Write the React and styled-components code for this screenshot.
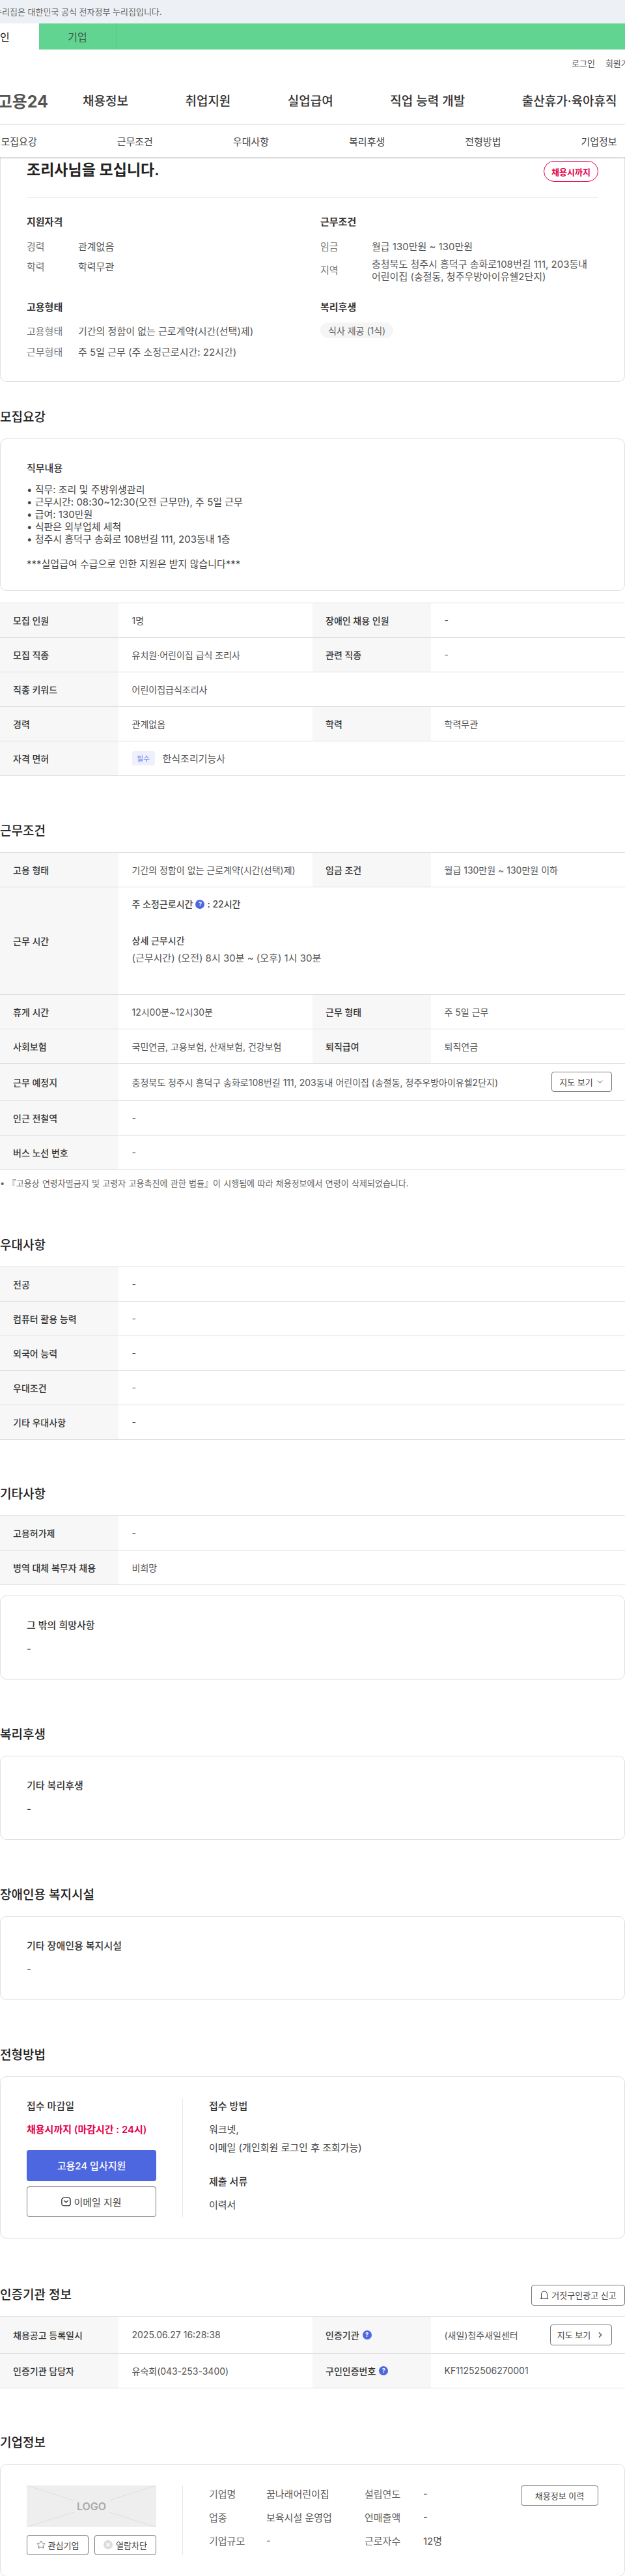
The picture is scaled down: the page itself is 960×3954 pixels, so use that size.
import React from "react";
import styled, { createGlobalStyle } from "styled-components";
import { ChevronDown, ChevronRight, Star } from "lucide-react";

const FONT = `Inter, "Noto Sans CJK KR", "Noto Sans", sans-serif`;

const GlobalStyle = createGlobalStyle`
  html, body {
    margin: 0;
    padding: 0;
    background: #fff;
  }
  body {
    font-family: ${FONT};
    font-size: 14px;
    color: #444;
  }
  * {
    box-sizing: border-box;
  }
`;

const Page = styled.div`
  width: 960px;
  height: 3954px;
  overflow: hidden;
  background: #fff;
`;

/* header */
const Notice = styled.div`
  height: 36px;
  background: #edf0f5;
  color: #666;
  font-size: 13px;
  line-height: 36px;
  padding-left: 0;
  white-space: nowrap;
  text-indent: -9px;
`;

const AudienceBar = styled.div`
  display: flex;
  height: 40px;
  margin-left: -60px;
  background: #62d491;
`;

const AudienceTab = styled.div`
  width: ${props => (props.$active ? "120px" : "119px")};
  display: flex;
  align-items: center;
  justify-content: center;
  font-size: 16px;
  color: ${props => (props.$active ? "#222" : "#3f5a49")};
  background: ${props => (props.$active ? "#fff" : "transparent")};
  border-right: ${props => (props.$active ? "0" : "1px solid #55c583")};
`;

const UtilLinks = styled.div`
  display: flex;
  gap: 16px;
  height: 40px;
  padding-left: 878px;
  align-items: center;
  font-size: 13px;
  color: #555;
  white-space: nowrap;
`;

const MainNav = styled.nav`
  display: flex;
  height: 76px;
  align-items: center;
  border-bottom: 1px solid #e8e8e8;
  white-space: nowrap;
`;

const Logo = styled.div`
  width: 74px;
  margin-right: 53px;
  display: flex;
  justify-content: flex-end;
  font-size: 25px;
  font-weight: 700;
  color: #555;
`;

const NavLinks = styled.div`
  display: flex;
  gap: 87.5px;
  font-size: 19px;
  font-weight: 500;
  color: #333;
`;

const SubNav = styled.div`
  position: relative;
  z-index: 2;
  height: 49px;
  background: #fff;
  box-shadow: 0 1px 3px rgba(0, 0, 0, 0.25);
`;

const SubNavGrid = styled.div`
  display: grid;
  grid-template-columns: repeat(6, 178.2px);
  margin-left: -60px;
  height: 100%;
  align-items: center;
  justify-items: center;
  font-size: 15px;
  color: #444;
  white-space: nowrap;
`;

/* cards */
const Card = styled.div`
  border: 1px solid #e0e0e0;
  border-radius: 10px;
  background: #fff;
  padding: ${props => props.$padding || "35px 40px 31px"};
  margin-top: ${props => props.$top || "0"};
`;

const SummaryCard = styled(Card)`
  border-top: 0;
  border-radius: 0 0 10px 10px;
  padding: 0 40px 36px;
  height: 345px;
`;

const TitleRow = styled.div`
  display: flex;
  justify-content: space-between;
  height: 63px;
  padding-top: 6px;
  border-bottom: 1px solid #e8e8e8;
`;

const JobTitle = styled.h1`
  margin: 0;
  font-size: 23px;
  line-height: 28px;
  font-weight: 600;
  color: #222;
`;

const DeadlineBadge = styled.span`
  width: 84px;
  height: 32px;
  display: flex;
  align-items: center;
  justify-content: center;
  border: 1px solid #e6004d;
  border-radius: 16px;
  color: #e6004d;
  font-size: 13px;
  font-weight: 600;
`;

const SummaryGrid = styled.div`
  display: grid;
  grid-template-columns: 451px 1fr;
  row-gap: 28px;
  padding-top: 27px;
`;

const BlockTitle = styled.h3`
  margin: 0 0 ${props => props.$gap || "17px"};
  font-size: 15px;
  line-height: 20px;
  font-weight: 600;
  color: #333;
`;

const InfoList = styled.div`
  display: flex;
  flex-direction: column;
  gap: ${props => props.$gap || "11.5px"};
`;

const InfoRow = styled.div`
  display: flex;
  align-items: center;
  font-size: 15px;
  line-height: 19px;
  min-height: 20px;
`;

const InfoLabel = styled.span`
  width: 79px;
  flex: none;
  color: #777;
`;

const InfoValue = styled.span`
  color: #555;
`;

const Chip = styled.span`
  display: inline-flex;
  align-items: center;
  height: 24px;
  padding: 0 12px;
  border-radius: 12px;
  background: #f5f5f5;
  color: #666;
  font-size: 14px;
`;

/* sections */
const Section = styled.section`
  margin-top: ${props => props.$top || "72px"};
`;

const HeadingRow = styled.div`
  display: flex;
  justify-content: space-between;
  align-items: center;
  height: 26px;
  margin-bottom: 19px;
`;

const Heading = styled.h2`
  margin: 0;
  font-size: 19px;
  line-height: 26px;
  font-weight: 500;
  color: #222;
`;

const CardTitle = styled.h4`
  margin: 0 0 ${props => props.$gap || "12.5px"};
  font-size: 15px;
  line-height: 20px;
  font-weight: ${props => props.$weight || 500};
  color: #333;
`;

const CardText = styled.div`
  font-size: 15px;
  line-height: 19px;
  color: #444;
  white-space: pre-line;
`;

/* tables */
const Table = styled.div`
  border-top: 1px solid #e0e0e0;
  margin-top: ${props => props.$top || "0"};
  margin-bottom: -1px;
`;

const Row = styled.div`
  display: grid;
  grid-template-columns: 182px 298px 182px 298px;
  height: ${props => props.$height || 53}px;
  border-bottom: 1px solid #e0e0e0;
`;

const Label = styled.div`
  display: flex;
  align-items: center;
  gap: 5px;
  padding-left: 20px;
  background: #f7f7f7;
  font-weight: 500;
  color: #333;
`;

const Value = styled.div`
  display: flex;
  align-items: center;
  justify-content: ${props => (props.$between ? "space-between" : "flex-start")};
  padding: 0 20px 0 20.5px;
  color: #555;
  grid-column: ${props => (props.$wide ? "span 3" : "auto")};
  white-space: nowrap;
`;

const StackValue = styled(Value)`
  display: block;
  padding-top: 16px;
  line-height: 20px;
`;

const StrongLine = styled.div`
  display: flex;
  align-items: center;
  gap: 4px;
  font-weight: 500;
  color: #444;
  margin-bottom: ${props => props.$gap || "7px"};
`;

const DetailLine = styled.div`
  font-size: 15px;
`;

const RequiredTag = styled.span`
  display: inline-flex;
  align-items: center;
  justify-content: center;
  width: 35px;
  height: 22px;
  margin-right: 12px;
  border-radius: 3px;
  background: #eef1fc;
  color: #6e86ee;
  font-size: 11px;
`;

const LicenseName = styled.span`
  font-size: 15px;
`;

const HelpDot = styled.span`
  display: inline-flex;
  align-items: center;
  justify-content: center;
  width: 14px;
  height: 14px;
  border-radius: 50%;
  background: #4d67e0;
  color: #fff;
  font-size: 9px;
  font-weight: 700;
`;

const Note = styled.div`
  margin-top: 11px;
  font-size: 13px;
  line-height: 20px;
  word-spacing: 0.7px;
  color: #666;
  white-space: nowrap;
`;

/* buttons */
const OutlineButton = styled.button`
  display: inline-flex;
  align-items: center;
  justify-content: center;
  gap: ${props => props.$gap || "4px"};
  flex: none;
  width: ${props => props.$width || "auto"};
  height: ${props => props.$height || "31px"};
  padding: 0;
  border: 1px solid #777;
  border-radius: 4px;
  background: #fff;
  font-family: inherit;
  font-size: ${props => props.$size || "13px"};
  color: #444;
  white-space: nowrap;
`;

const ApplyButton = styled.button`
  display: block;
  width: 100%;
  height: 48px;
  margin-bottom: 8px;
  border: 0;
  border-radius: 4px;
  background: #4d67e0;
  color: #fff;
  font-family: inherit;
  font-size: 15px;
  font-weight: 500;
`;

/* apply card */
const SplitRow = styled.div`
  display: grid;
  grid-template-columns: 199px 1fr;
  column-gap: 40px;
`;

const SplitRight = styled.div`
  border-left: 1px solid #e8e8e8;
  padding-left: 40px;
`;

const ApplyTitle = styled.div`
  font-size: 15px;
  line-height: 26px;
  font-weight: 500;
  color: #333;
  margin-top: ${props => props.$top || "0"};
`;

const DeadlineText = styled.div`
  margin: 9px 0 17px;
  font-size: 15px;
  line-height: 28px;
  font-weight: 600;
  color: #e6004d;
  white-space: nowrap;
`;

const ApplyText = styled.div`
  margin-top: 9px;
  font-size: 15px;
  line-height: 28px;
  color: #444;
`;

/* company card */
const LogoBox = styled.div`
  position: relative;
  display: flex;
  align-items: center;
  justify-content: center;
  height: 64px;
  margin-bottom: 12px;
  background: #eee;
  color: #a9a9a9;
  font-size: 16px;
  font-weight: 600;
`;

const LogoLines = styled.svg`
  position: absolute;
  inset: 0;
`;

const CompanyActions = styled.div`
  display: flex;
  justify-content: space-between;
`;

const CompanyInfo = styled.div`
  display: grid;
  grid-template-columns: 88px 151px 90px 150px;
  grid-auto-rows: 25px;
  row-gap: 11px;
  align-items: center;
  font-size: 15px;
  color: #666;
`;

const CompanyRight = styled(SplitRight)`
  display: flex;
  justify-content: space-between;
`;

const BlockButton = styled(OutlineButton)`
  display: flex;
`;

const MailIcon = () => (
  <svg width="15" height="15" viewBox="0 0 15 15" fill="none" stroke="#333" strokeWidth="1.4">
    <rect x="0.9" y="1.4" width="13.2" height="12.2" rx="3.2" />
    <path d="M4.6 6l2.9 2.4L10.4 6" strokeLinecap="round" strokeLinejoin="round" />
  </svg>
);

const SirenIcon = () => (
  <svg width="14" height="15" viewBox="0 0 14 15" fill="none" stroke="#444" strokeWidth="1.1">
    <path d="M2.5 13V6.5a4.5 4.5 0 0 1 9 0V13" />
    <path d="M0.8 13.4h12.4" />
  </svg>
);

const BlockIcon = () => (
  <svg width="14" height="14" viewBox="0 0 14 14">
    <circle cx="7" cy="7" r="7" fill="#dcdcdc" />
    <path d="M4.6 4.6l4.8 4.8M9.4 4.6l-4.8 4.8" stroke="#fff" strokeWidth="1.5" />
  </svg>
);

const NAV_ITEMS = ["채용정보", "취업지원", "실업급여", "직업 능력 개발", "출산휴가·육아휴직"];
const TAB_ITEMS = ["모집요강", "근무조건", "우대사항", "복리후생", "전형방법", "기업정보"];

const PREFER_ROWS = ["전공", "컴퓨터 활용 능력", "외국어 능력", "우대조건", "기타 우대사항"];

function TwoCellRow({ a, b, c, d, height }) {
  return (
    <Row $height={height}>
      <Label>{a}</Label>
      <Value>{b}</Value>
      <Label>{c}</Label>
      <Value>{d}</Value>
    </Row>
  );
}

function WideRow({ label, value, height }) {
  return (
    <Row $height={height}>
      <Label>{label}</Label>
      <Value $wide>{value}</Value>
    </Row>
  );
}

export default function App() {
  return (
    <Page>
      <GlobalStyle />

      <Notice>누리집은 대한민국 공식 전자정부 누리집입니다.</Notice>
      <AudienceBar>
        <AudienceTab $active>개인</AudienceTab>
        <AudienceTab>기업</AudienceTab>
      </AudienceBar>
      <UtilLinks>
        <span>로그인</span>
        <span>회원가입</span>
      </UtilLinks>
      <MainNav>
        <Logo>고용24</Logo>
        <NavLinks>
          {NAV_ITEMS.map(item => (
            <span key={item}>{item}</span>
          ))}
        </NavLinks>
      </MainNav>
      <SubNav>
        <SubNavGrid>
          {TAB_ITEMS.map(item => (
            <span key={item}>{item}</span>
          ))}
        </SubNavGrid>
      </SubNav>

      <SummaryCard>
        <TitleRow>
          <JobTitle>조리사님을 모십니다.</JobTitle>
          <DeadlineBadge>채용시까지</DeadlineBadge>
        </TitleRow>
        <SummaryGrid>
          <div>
            <BlockTitle>지원자격</BlockTitle>
            <InfoList>
              <InfoRow>
                <InfoLabel>경력</InfoLabel>
                <InfoValue>관계없음</InfoValue>
              </InfoRow>
              <InfoRow>
                <InfoLabel>학력</InfoLabel>
                <InfoValue>학력무관</InfoValue>
              </InfoRow>
            </InfoList>
          </div>
          <div>
            <BlockTitle>근무조건</BlockTitle>
            <InfoList $gap="7.5px">
              <InfoRow>
                <InfoLabel>임금</InfoLabel>
                <InfoValue>월급 130만원 ~ 130만원</InfoValue>
              </InfoRow>
              <InfoRow>
                <InfoLabel>지역</InfoLabel>
                <InfoValue>
                  충청북도 청주시 흥덕구 송화로108번길 111, 203동내
                  <br />
                  어린이집 (송절동, 청주우방아이유쉘2단지)
                </InfoValue>
              </InfoRow>
            </InfoList>
          </div>
          <div>
            <BlockTitle>고용형태</BlockTitle>
            <InfoList>
              <InfoRow>
                <InfoLabel>고용형태</InfoLabel>
                <InfoValue>기간의 정함이 없는 근로계약(시간(선택)제)</InfoValue>
              </InfoRow>
              <InfoRow>
                <InfoLabel>근무형태</InfoLabel>
                <InfoValue>주 5일 근무 (주 소정근로시간: 22시간)</InfoValue>
              </InfoRow>
            </InfoList>
          </div>
          <div>
            <BlockTitle $gap="13.5px">복리후생</BlockTitle>
            <Chip>식사 제공 (1식)</Chip>
          </div>
        </SummaryGrid>
      </SummaryCard>

      <Section $top="42px">
        <HeadingRow>
          <Heading>모집요강</Heading>
        </HeadingRow>
        <Card>
          <CardTitle>직무내용</CardTitle>
          <CardText>
            {`• 직무: 조리 및 주방위생관리
• 근무시간: 08:30~12:30(오전 근무만), 주 5일 근무
• 급여: 130만원
• 식판은 외부업체 세척
• 청주시 흥덕구 송화로 108번길 111, 203동내 1층

***실업급여 수급으로 인한 지원은 받지 않습니다***`}
          </CardText>
        </Card>
        <Table $top="18px">
          <TwoCellRow a="모집 인원" b="1명" c="장애인 채용 인원" d="-" />
          <TwoCellRow a="모집 직종" b="유치원·어린이집 급식 조리사" c="관련 직종" d="-" />
          <WideRow label="직종 키워드" value="어린이집급식조리사" />
          <TwoCellRow a="경력" b="관계없음" c="학력" d="학력무관" />
          <WideRow
            label="자격 면허"
            value={
              <>
                <RequiredTag>필수</RequiredTag>
                <LicenseName>한식조리기능사</LicenseName>
              </>
            }
          />
        </Table>
      </Section>

      <Section $top="73px">
        <HeadingRow>
          <Heading>근무조건</Heading>
        </HeadingRow>
        <Table>
          <TwoCellRow
            a="고용 형태"
            b="기간의 정함이 없는 근로계약(시간(선택)제)"
            c="임금 조건"
            d="월급 130만원 ~ 130만원 이하"
          />
          <Row $height={165}>
            <Label>근무 시간</Label>
            <StackValue $wide>
              <StrongLine $gap="36px">
                주 소정근로시간 <HelpDot>?</HelpDot>: 22시간
              </StrongLine>
              <StrongLine>상세 근무시간</StrongLine>
              <DetailLine>(근무시간) (오전) 8시 30분 ~ (오후) 1시 30분</DetailLine>
            </StackValue>
          </Row>
          <TwoCellRow a="휴게 시간" b="12시00분~12시30분" c="근무 형태" d="주 5일 근무" />
          <TwoCellRow
            a="사회보험"
            b="국민연금, 고용보험, 산재보험, 건강보험"
            c="퇴직급여"
            d="퇴직연금"
          />
          <Row $height={57}>
            <Label>근무 예정지</Label>
            <Value $wide $between>
              충청북도 청주시 흥덕구 송화로108번길 111, 203동내 어린이집 (송절동, 청주우방아이유쉘2단지)
              <OutlineButton $width="93px">
                지도 보기 <ChevronDown size={13} strokeWidth={1.6} />
              </OutlineButton>
            </Value>
          </Row>
          <WideRow label="인근 전철역" value="-" />
          <WideRow label="버스 노선 번호" value="-" />
        </Table>
        <Note>•&nbsp;『고용상 연령차별금지 및 고령자 고용촉진에 관한 법률』이 시행됨에 따라 채용정보에서 연령이 삭제되었습니다.</Note>
      </Section>

      <Section $top="73px">
        <HeadingRow>
          <Heading>우대사항</Heading>
        </HeadingRow>
        <Table>
          {PREFER_ROWS.map(label => (
            <WideRow key={label} label={label} value="-" />
          ))}
        </Table>
      </Section>

      <Section>
        <HeadingRow>
          <Heading>기타사항</Heading>
        </HeadingRow>
        <Table>
          <WideRow label="고용허가제" value="-" />
          <WideRow label="병역 대체 복무자 채용" value="비희망" />
        </Table>
        <Card $top="17px" $padding="35px 40px 37px">
          <CardTitle $gap="16px">그 밖의 희망사항</CardTitle>
          <CardText>-</CardText>
        </Card>
      </Section>

      <Section>
        <HeadingRow>
          <Heading>복리후생</Heading>
        </HeadingRow>
        <Card $padding="35px 40px 37px">
          <CardTitle $gap="16px">기타 복리후생</CardTitle>
          <CardText>-</CardText>
        </Card>
      </Section>

      <Section>
        <HeadingRow>
          <Heading>장애인용 복지시설</Heading>
        </HeadingRow>
        <Card $padding="35px 40px 37px">
          <CardTitle $gap="16px">기타 장애인용 복지시설</CardTitle>
          <CardText>-</CardText>
        </Card>
      </Section>

      <Section>
        <HeadingRow>
          <Heading>전형방법</Heading>
        </HeadingRow>
        <Card $padding="32px 40px 32px">
          <SplitRow>
            <div>
              <ApplyTitle>접수 마감일</ApplyTitle>
              <DeadlineText>채용시까지 (마감시간 : 24시)</DeadlineText>
              <ApplyButton>고용24 입사지원</ApplyButton>
              <BlockButton $width="100%" $height="47px" $size="15px">
                <MailIcon />
                이메일 지원
              </BlockButton>
            </div>
            <SplitRight>
              <ApplyTitle>접수 방법</ApplyTitle>
              <ApplyText>
                워크넷,
                <br />
                이메일 (개인회원 로그인 후 조회가능)
              </ApplyText>
              <ApplyTitle $top="25px">제출 서류</ApplyTitle>
              <ApplyText>이력서</ApplyText>
            </SplitRight>
          </SplitRow>
        </Card>
      </Section>

      <Section $top="74px">
        <HeadingRow>
          <Heading>인증기관 정보</Heading>
          <OutlineButton $width="144px" $height="32px">
            <SirenIcon />
            거짓구인광고 신고
          </OutlineButton>
        </HeadingRow>
        <Table>
          <Row $height={57}>
            <Label>채용공고 등록일시</Label>
            <Value>2025.06.27 16:28:38</Value>
            <Label>
              인증기관 <HelpDot>?</HelpDot>
            </Label>
            <Value $between>
              (새일)청주새일센터
              <OutlineButton $width="95px" $height="32px" $gap="8px">
                지도 보기 <ChevronRight size={14} strokeWidth={2} />
              </OutlineButton>
            </Value>
          </Row>
          <Row>
            <Label>인증기관 담당자</Label>
            <Value>유숙희(043-253-3400)</Value>
            <Label>
              구인인증번호 <HelpDot>?</HelpDot>
            </Label>
            <Value>KF11252506270001</Value>
          </Row>
        </Table>
      </Section>

      <Section>
        <HeadingRow>
          <Heading>기업정보</Heading>
        </HeadingRow>
        <Card $padding="32px 40px 32px">
          <SplitRow>
            <div>
              <LogoBox>
                <LogoLines width="199" height="64" viewBox="0 0 199 64" fill="none" stroke="#dedede">
                  <path d="M0 0l72 23M199 0l-72 23M0 64l72-23M199 64l-72-23" />
                </LogoLines>
                LOGO
              </LogoBox>
              <CompanyActions>
                <OutlineButton $width="95px">
                  <Star size={14} strokeWidth={1.3} />
                  관심기업
                </OutlineButton>
                <OutlineButton $width="95px" $gap="5px">
                  <BlockIcon />
                  열람차단
                </OutlineButton>
              </CompanyActions>
            </div>
            <CompanyRight>
              <CompanyInfo>
                <span>기업명</span>
                <InfoValue>꿈나래어린이집</InfoValue>
                <span>설립연도</span>
                <InfoValue>-</InfoValue>
                <span>업종</span>
                <InfoValue>보육시설 운영업</InfoValue>
                <span>연매출액</span>
                <InfoValue>-</InfoValue>
                <span>기업규모</span>
                <InfoValue>-</InfoValue>
                <span>근로자수</span>
                <InfoValue>12명</InfoValue>
              </CompanyInfo>
              <OutlineButton $width="119px" $height="31px">
                채용정보 이력
              </OutlineButton>
            </CompanyRight>
          </SplitRow>
        </Card>
      </Section>
    </Page>
  );
}
